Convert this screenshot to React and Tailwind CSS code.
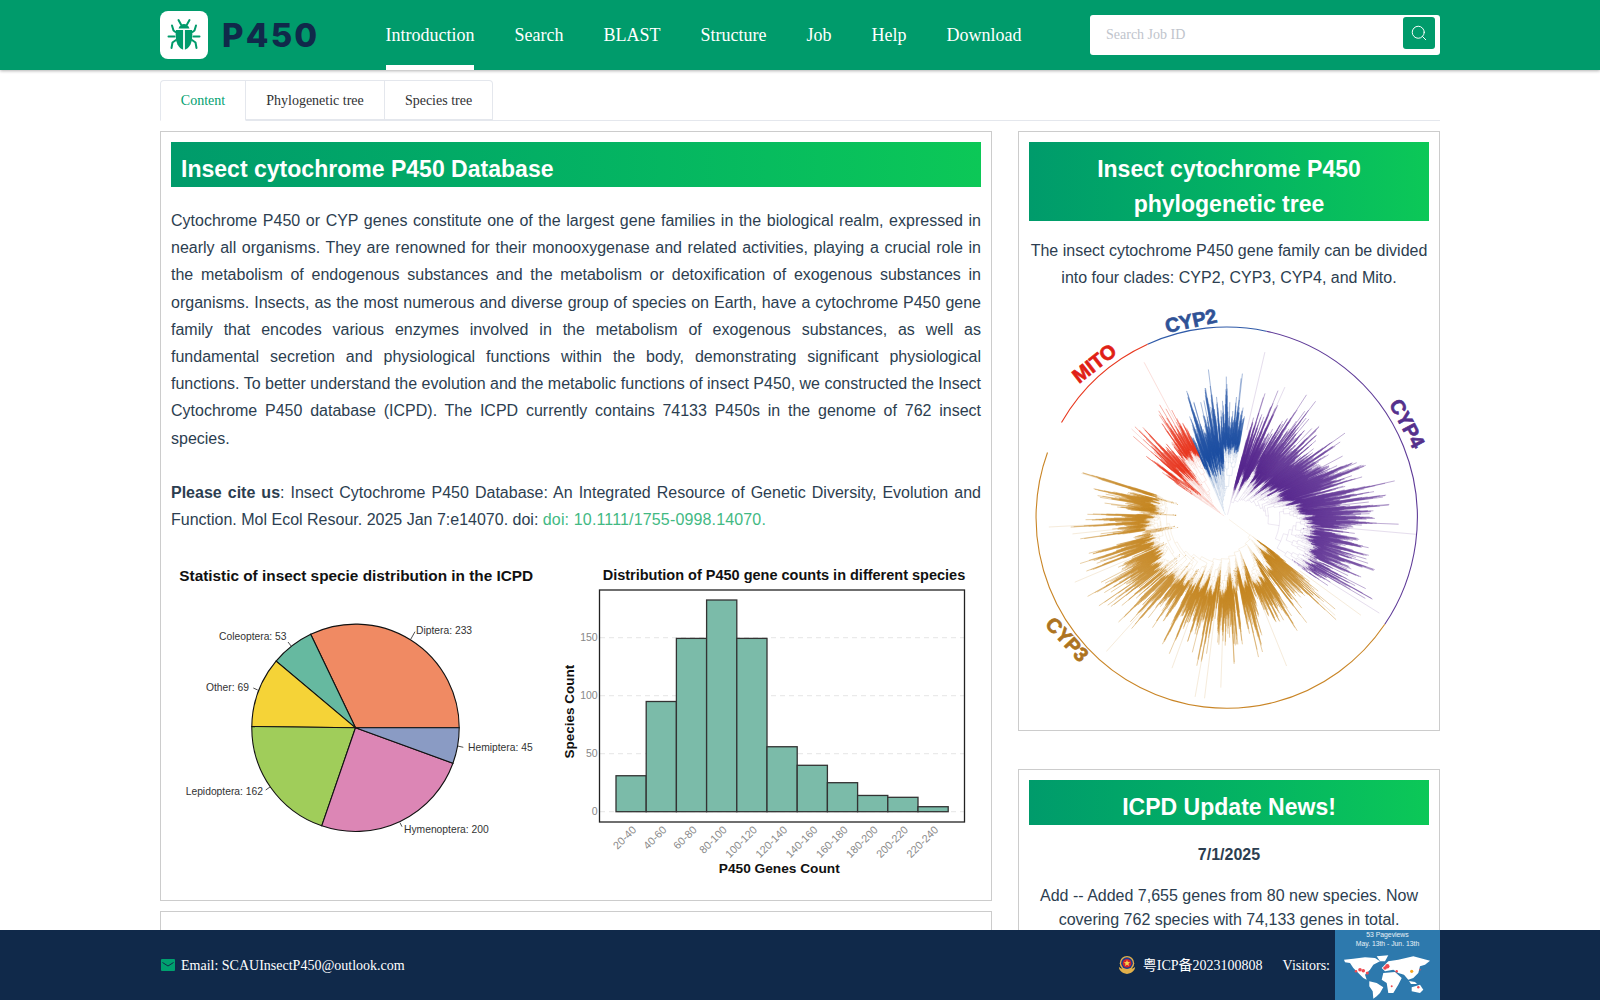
import { useMemo } from "react"
import { Search } from "lucide-react"

const navItems = ["Introduction", "Search", "BLAST", "Structure", "Job", "Help", "Download"]

const Beetle = () => (
  <svg viewBox="0 0 48 48" className="h-[48px] w-[48px]" fill="none" stroke="#009b6b" strokeWidth="2" strokeLinecap="round" strokeLinejoin="round">
    <path d="M18.500 17.500c1-3 3-4.500 5.500-4.500s4.500 1.500 5.500 4.500z" fill="#009b6b" stroke="none" />
    <path d="M16 19h16c.8 5 .3 10.500-1.500 14.500-1.500 3-4 5-6.500 5.500-2.500-.5-5-2.500-6.500-5.500C15.700 29.500 15.200 24 16 19z" fill="#009b6b" stroke="none" />
    <path d="M24 19v20" stroke="#fff" strokeWidth="1.800" />
    <path d="M18.500 9l2.500 4.500M29.500 9L27 13.500" />
    <path d="M12 14.500l1.500 5 2 1.500M36 14.500l-1.500 5-2 1.500" />
    <path d="M8.500 25.500h6M39.500 25.500h-6" />
    <path d="M11.500 37l1-5.500 3.500-2.500M36.500 37l-1-5.500-3.500-2.500" />
  </svg>
)

// slice angles are read from the picture, they do not follow the counts exactly
const pieData = [
  { name: "Diptera", from: 0, to: 115.6, color: "#f08a63" },
  { name: "Coleoptera", from: 115.6, to: 140, color: "#66b9a0" },
  { name: "Other", from: 140, to: 179.3, color: "#f5d337" },
  { name: "Lepidoptera", from: 179.3, to: 251, color: "#a0cd5a" },
  { name: "Hymenoptera", from: 251, to: 340, color: "#dc86b5" },
  { name: "Hemiptera", from: 340, to: 360, color: "#8a9bc4" },
]

const pieLabels = [
  { text: "Diptera: 233", x: 245, y: 83.7, l: [244, 81.7, 239.7, 89.3] },
  { text: "Coleoptera: 53", x: 48, y: 90.3, l: [117, 92, 120.7, 96.7] },
  { text: "Other: 69", x: 35, y: 141, l: [82.3, 138, 86.7, 140] },
  { text: "Lepidoptera: 162", x: 14.7, y: 245, l: [94.7, 240, 99, 237] },
  { text: "Hymenoptera: 200", x: 233, y: 283, l: [231, 276.7, 229, 272.7] },
  { text: "Hemiptera: 45", x: 297, y: 200.7, l: [292.3, 197.3, 286.7, 196] },
]

const PieChart = () => {
  const cx = 184.500
  const cy = 177.800
  const r = 103.700
  const slices = pieData.map((d) => {
    const a0 = (d.from * Math.PI) / 180
    const a1 = (d.to * Math.PI) / 180
    const large = a1 - a0 > Math.PI ? 1 : 0
    const path = `M${cx} ${cy}L${cx + r * Math.cos(a0)} ${cy - r * Math.sin(a0)}A${r} ${r} 0 ${large} 0 ${cx + r * Math.cos(a1)} ${cy - r * Math.sin(a1)}Z`
    return { ...d, path }
  })
  return (
    <svg viewBox="0 0 385 340" className="h-[340px] w-[385px] shrink-0" fontFamily="'Liberation Sans', Arial, sans-serif">
      <text x="8.300" y="31" fontSize="15.350" fontWeight="700" fill="#111">Statistic of insect specie distribution in the ICPD</text>
      {slices.map((s) => (
        <path key={s.name} d={s.path} fill={s.color} stroke="#111" strokeWidth="1.1" />
      ))}
      {pieLabels.map((p) => (
        <g key={p.text}>
          <line x1={p.l[0]} y1={p.l[1]} x2={p.l[2]} y2={p.l[3]} stroke="#222" strokeWidth="0.8" />
          <text x={p.x} y={p.y} fontSize="10.300" fill="#333">{p.text}</text>
        </g>
      ))}
    </svg>
  )
}

const bars = [31, 95, 149.4, 182.5, 149.4, 56, 40, 25, 14, 12.4, 4.3]
const barLabels = ["20-40", "40-60", "60-80", "80-100", "100-120", "120-140", "140-160", "160-180", "180-200", "200-220", "220-240"]

const BarChart = () => {
  const y0 = 261.700
  const k = 1.16
  return (
    <svg viewBox="0 0 440 340" className="h-[340px] w-[440px] shrink-0" fontFamily="'Liberation Sans', Arial, sans-serif">
      <text x="46.700" y="29.500" fontSize="14.500" fontWeight="700" fill="#111">Distribution of P450 gene counts in different species</text>
      {[0, 50, 100, 150].map((v) => (
        <g key={v}>
          <line x1="44" x2="408" y1={y0 - v * k} y2={y0 - v * k} stroke="#ddd" strokeWidth="0.8" strokeDasharray="5 4" />
          <text x="41.700" y={y0 - v * k + 3.500} textAnchor="end" fontSize="10.500" fill="#888">{v}</text>
        </g>
      ))}
      <rect x="43.500" y="40" width="365" height="232" fill="none" stroke="#222" strokeWidth="1.3" />
      {bars.map((b, i) => (
        <rect key={i} x={60 + i * 30.200} y={y0 - b * k} width={30.200} height={b * k} fill="#7bbba9" stroke="#333" strokeWidth="1.300" />
      ))}
      {barLabels.map((l, i) => (
        <text key={l} fontSize="10.800" fill="#888" textAnchor="end" transform={`translate(${81 + i * 30.200} 280.500) rotate(-45)`}>{l}</text>
      ))}
      <text x="223.300" y="322.700" textAnchor="middle" fontSize="13.700" fontWeight="700" fill="#111">P450 Genes Count</text>
      <text transform="translate(18 161.700) rotate(-90)" textAnchor="middle" fontSize="13.500" fontWeight="700" fill="#111">Species Count</text>
    </svg>
  )
}

// radial tree, a real dendrogram grown with a fixed seed so it stays the same between renders
const makeRng = (seed) => () => {
  seed = (seed * 1664525 + 1013904223) % 4294967296
  return seed / 4294967296
}

const interp = (pts, a) => {
  for (let i = 0; i < pts.length - 1; i++) {
    const [a0, v0] = pts[i]
    const [a1, v1] = pts[i + 1]
    if (a <= a0 && a >= a1) return v0 + ((a - a0) / (a1 - a0)) * (v1 - v0)
  }
  return pts[pts.length - 1][1]
}

const clades = [
  { color: "#174a9f", from: 114, to: 80, n: 320, tips: [[114, 112], [100, 116], [90, 124], [80, 122]], inner: [[114, 70], [80, 75]], rootIn: 6 },
  { color: "#e62e14", from: 146, to: 114, n: 320, tips: [[146, 112], [135, 112], [125, 116], [114, 122]], inner: [[146, 85], [114, 70]], rootIn: 5 },
  { color: "#56248c", from: 76, to: -34, n: 1000, tips: [[76, 104], [60, 116], [40, 124], [20, 136], [0, 150], [-15, 146], [-34, 140]], inner: [[76, 40], [40, 55], [20, 62], [0, 78], [-15, 92], [-34, 105]], rootIn: 14 },
  { color: "#c17f14", from: -36, to: -198, n: 1400, tips: [[-36, 128], [-60, 122], [-80, 128], [-100, 130], [-110, 126], [-130, 132], [-150, 140], [-170, 130], [-198, 126]], inner: [[-36, 50], [-60, 66], [-90, 74], [-135, 80], [-180, 66], [-198, 62]], rootIn: 28 },
]

const outliers = [
  { color: "#e8381f", a: 118, r: 176 },
  { color: "#e8381f", a: 137, r: 130 },
  { color: "#5f2d91", a: 77, r: 170 },
  { color: "#5f2d91", a: 66, r: 143 },
  { color: "#5f2d91", a: -5, r: 190 },
  { color: "#5f2d91", a: -32, r: 180 },
  { color: "#c7851f", a: -36, r: 166 },
  { color: "#c7851f", a: -42, r: 146 },
  { color: "#c7851f", a: -68, r: 160 },
  { color: "#c7851f", a: -92, r: 170 },
  { color: "#c7851f", a: -97, r: 182 },
  { color: "#c7851f", a: -100, r: 182 },
  { color: "#c7851f", a: -110, r: 160 },
  { color: "#c7851f", a: -132, r: 180 },
  { color: "#c7851f", a: -157, r: 165 },
  { color: "#c7851f", a: -177, r: 178 },
  { color: "#c7851f", a: -174, r: 155 },
  { color: "#c7851f", a: 163, r: 152 },
]

const CX = 207.700
const CY = 225.700

const pt = (r, deg, cx = CX, cy = CY) => {
  const a = (deg * Math.PI) / 180
  return `${(cx + r * Math.cos(a)).toFixed(1)} ${(cy - r * Math.sin(a)).toFixed(1)}`
}

const arc = (r, a0, a1) => `M${pt(r, a0)}A${r} ${r} 0 ${Math.abs(a0 - a1) > 180 ? 1 : 0} ${a0 > a1 ? 1 : 0} ${pt(r, a1)}`

const growClade = (c, rng) => {
  let leaves = ""
  let branches = ""
  // bumps of the crown: each run of leaves shares a spike, some runs sink to leave a notch
  const profile = []
  while (profile.length < c.n) {
    const size = 4 + Math.floor(rng() * 22)
    const peak = rng() * 58
    const notch = rng() < 0.12 ? 14 + rng() * 24 : 0
    for (let j = 0; j < size; j++) {
      const t = (j + 0.5) / size
      profile.push(peak * Math.pow(1 - Math.abs(2 * t - 1), 1.6) - notch)
    }
  }
  let leafNo = 0
  const grow = (a0, a1, n, parentR, depth) => {
    const mid = (a0 + a1) / 2
    const target = interp(c.inner, mid)
    if (n === 1) {
      const long = rng() < 0.06 ? rng() * 28 : 0
      const raw = interp(c.tips, mid) - 34 + profile[leafNo++] + (rng() - 0.5) * 22 + long
      // nothing may cross the ring
      const tip = Math.min(raw, 172)
      const start = Math.min(parentR, tip - 1)
      leaves += `M${pt(start, mid)}L${pt(tip, mid)}`
      return { a: mid, r: start }
    }
    const ladder = depth < 12 && n > 40
    const f = ladder ? 0.02 + rng() * 0.1 : 0.2 + rng() * 0.6
    const n1 = Math.max(1, Math.min(n - 1, Math.round(n * f)))
    const split = a0 + (a1 - a0) * (n1 / n)
    const step = ladder ? 1 + rng() * 2.500 : Math.max(0.6, (target - parentR) * (0.08 + rng() * 0.2)) + rng() * 3
    const r = Math.min(parentR + step, 150)
    const first = grow(a0, split, n1, r, depth + 1)
    const second = grow(split, a1, n - n1, r, depth + 1)
    branches += arc(r, first.a, second.a)
    branches += `M${pt(r, first.a)}L${pt(first.r, first.a)}M${pt(r, second.a)}L${pt(second.r, second.a)}`
    // keep the root of a wedge close to its first edge
    return { a: depth < 8 ? first.a + (second.a - first.a) * 0.08 : (first.a + second.a) / 2, r }
  }
  const root = grow(c.from, c.to, c.n, c.rootIn, 0)
  branches += `M${pt(3, root.a)}L${pt(root.r, root.a)}`
  return { color: c.color, leaves, branches }
}

const PhyloTree = () => {
  const rings = useMemo(() => {
    const rng = makeRng(450)
    return clades.map((c) => growClade(c, rng))
  }, [])
  return (
    <svg viewBox="0 0 420 440" className="h-[440px] w-[420px]" fontFamily="'Liberation Sans', Arial, sans-serif" fontWeight="700">
      {rings.map((r) => (
        <g key={r.color} stroke={r.color} fill="none">
          <path d={r.branches} strokeWidth="0.3" opacity="0.35" />
          <path d={r.leaves} strokeWidth="0.4" opacity="0.95" />
        </g>
      ))}
      {outliers.map((o, i) => (
        <path key={i} d={`M${pt(90, o.a)}L${pt(o.r, o.a)}`} stroke={o.color} strokeWidth="0.4" opacity="0.4" />
      ))}
      <path d={arc(190.700, 150, 114.500)} stroke="#e8381f" strokeWidth="1.100" fill="none" />
      <path d={arc(190.700, 114.500, 78)} stroke="#2f5aa8" strokeWidth="1.100" fill="none" />
      <path d={arc(190.700, 78, -34)} stroke="#5f3b98" strokeWidth="1.100" fill="none" />
      <path d={arc(190.700, -34, -200)} stroke="#c98526" strokeWidth="1.100" fill="none" />
      <g strokeWidth="0.7" fontSize="20">
        <text stroke="#e01f16" fill="#e01f16" transform="translate(60 92) rotate(-38)">MITO</text>
        <text stroke="#2f5296" fill="#2f5296" transform="translate(147.700 41) rotate(-12)">CYP2</text>
        <text stroke="#55308c" fill="#55308c" transform="translate(369.700 111.700) rotate(62)">CYP4</text>
        <text stroke="#ad7320" fill="#ad7320" transform="translate(25.300 333) rotate(47)">CYP3</text>
      </g>
    </svg>
  )
}

const WorldMap = () => (
  <div className="relative h-[70px] w-[105px] shrink-0 bg-[#2d79ad] font-['Liberation_Sans'] text-white">
    <p className="text-center text-[6.800px] leading-[9px] text-white/90">53 Pageviews<br />May. 13th - Jun. 13th</p>
    <svg viewBox="0 0 105 48" className="absolute bottom-[1px] left-0 h-[48px] w-[105px]" fill="#fff">
      <polygon points="9,8.700 18.300,7.700 30,6.300 40,7 45,10.300 38.300,13.700 35,18.700 30,23.700 31.700,28.700 28.300,27 23.300,22 18.300,17 15,12 10,11.300" />
      <polygon points="41.700,5.300 53.300,4.300 50,10.300 45,10.300" />
      <polygon points="34.300,30.300 41.700,32 48.300,36.300 45,42 41.700,45.300 38.300,47.700 37.700,40.300 34.300,35.300" />
      <polygon points="46.700,17 53.300,10.300 63.300,8.700 78.300,5.300 95,9.700 90,13.700 85,15.300 83.300,22 78.300,27 73.300,28.700 69,23.700 63.300,22 58.300,18.700 50,20.300" />
      <polygon points="48.300,22 60,21 66.700,27 63.300,33.700 58.300,42 53.300,42 51.700,32 46.700,28.700" />
      <polygon points="76.700,36.300 85,33.700 88.300,38.700 85,42 76.700,40.300" />
      <polygon points="74,30 80,31 82,33 76,33" />
    </svg>
    <svg viewBox="0 0 105 48" className="absolute bottom-[1px] left-0 h-[48px] w-[105px]" fill="#ef4b52">
      <circle cx="21" cy="20.300" r="1.300" /><circle cx="25" cy="18.700" r="1.800" /><circle cx="28.300" cy="19.700" r="1.800" /><circle cx="32.300" cy="22" r="1.600" />
      <circle cx="50" cy="17" r="1.800" /><circle cx="52.300" cy="15.300" r="2.200" /><circle cx="61.700" cy="20.300" r="1.200" /><circle cx="56.700" cy="35.300" r="1" />
      <circle cx="83.300" cy="36.300" r="1.200" /><circle cx="85" cy="18.700" r="0.800" />
      <circle cx="76.700" cy="20.300" r="1.600" fill="#f5a623" />
    </svg>
  </div>
)

const PoliceBadge = () => (
  <svg viewBox="0 0 20 22" className="h-[20px] w-[18px] shrink-0">
    <path d="M1 13c0 4 3 7 9 8 6-1 9-4 9-8-1 1-2 2-4 2H5c-2 0-3-1-4-2z" fill="#e2b04a" />
    <circle cx="10" cy="9" r="8" fill="#e2b04a" />
    <circle cx="10" cy="9" r="6.500" fill="#1b3a8f" />
    <circle cx="10" cy="9" r="4.800" fill="#d5232a" />
    <path d="M10 5.500l1 2.300 2.400.2-1.800 1.600.6 2.400L10 10.700 7.800 12l.6-2.400L6.600 8l2.400-.2z" fill="#f4d04f" />
  </svg>
)

const MailIcon = () => (
  <svg viewBox="0 0 14 12" className="ml-[1px] mr-[6px] h-[12px] w-[14px] shrink-0">
    <rect width="14" height="12" rx="1" fill="#00a06f" />
    <path d="M1.500 3.500L7 7l5.500-3.500" fill="none" stroke="#10294a" strokeWidth="1" />
  </svg>
)

const Panel = ({ children, className = "" }) => (
  <div className={`border border-[#cccccc] p-[10px] ${className}`}>{children}</div>
)

export default function App() {
  return (
    <div className="h-screen overflow-hidden bg-white font-['Liberation_Sans',Arial,sans-serif] text-[#2c3e50]">
      <header className="h-[70px] bg-[#009b6b] shadow-[0_1px_3px_rgba(0,0,0,0.3)]">
        <div className="mx-auto flex h-full w-[1280px] items-start font-['Liberation_Serif',serif]">
          <div className="mt-[11px] flex w-[225.500px] items-center">
            <div className="flex h-[48px] w-[48px] items-center justify-center rounded-[8px] bg-white">
              <Beetle />
            </div>
            <span className="ml-[14px] font-['Inter',sans-serif] text-[33px] font-extrabold leading-[48px] tracking-[2.200px] text-[#10294a]">P450</span>
          </div>
          <nav className="flex h-full gap-[40px] text-[18px] text-white">
            {navItems.map((item, i) => (
              <a key={item} className={`block h-full pt-[22px] leading-[26px] ${i === 0 ? "border-b-[5px] border-white" : ""}`}>{item}</a>
            ))}
          </nav>
          <div className="ml-auto mt-[15px] flex h-[40px] w-[350px] justify-between rounded-[3px] bg-white pl-[16px] pr-[5px]">
            <span className="text-[14px] leading-[39px] text-[#c0c4cc]">Search Job ID</span>
            <button className="mt-[2px] flex h-[32px] w-[32px] items-center justify-center rounded-[3px] bg-[#009b6b] text-white">
              <Search size={18} strokeWidth={1.300} />
            </button>
          </div>
        </div>
      </header>

      <main className="mx-auto w-[1280px] pt-[10px]">
        <div className="flex h-[41px] border-b border-[#e4e7ed] font-['Liberation_Serif',serif] text-[14px] text-[#303133]">
          <div className="flex h-[41px] w-[86px] items-center justify-center rounded-tl-[4px] border border-b-white border-[#e4e7ed] bg-white text-[#00a06f]">Content</div>
          <div className="flex h-[40px] w-[139px] items-center justify-center border-y border-r border-[#e4e7ed]">Phylogenetic tree</div>
          <div className="flex h-[40px] w-[108px] items-center justify-center rounded-tr-[4px] border-y border-r border-[#e4e7ed]">Species tree</div>
        </div>

        <div className="mt-[10px] flex items-start justify-between">
          <div className="w-[832px]">
            <Panel className="h-[770px]">
              <h2 className="h-[45px] bg-gradient-to-r from-[#009b6b] to-[#0cc857] pl-[10px] text-[23.040px] font-bold leading-[54px] text-white">Insect cytochrome P450 Database</h2>
              <p className="mt-[20px] text-justify text-[16px] leading-[27.200px]">
                Cytochrome P450 or CYP genes constitute one of the largest gene families in the biological realm, expressed in nearly all organisms. They are renowned for their monooxygenase and related activities, playing a crucial role in the metabolism of endogenous substances and the metabolism or detoxification of exogenous substances in organisms. Insects, as the most numerous and diverse group of species on Earth, have a cytochrome P450 gene family that encodes various enzymes involved in the metabolism of exogenous substances, as well as fundamental secretion and physiological functions within the body, demonstrating significant physiological functions. To better understand the evolution and the metabolic functions of insect P450, we constructed the Insect Cytochrome P450 database (ICPD). The ICPD currently contains 74133 P450s in the genome of 762 insect species.
              </p>
              <p className="mt-[27px] text-justify text-[16px] leading-[27.200px]">
                <strong>Please cite us</strong>: Insect Cytochrome P450 Database: An Integrated Resource of Genetic Diversity, Evolution and Function. Mol Ecol Resour. 2025 Jan 7:e14070. doi: <a className="tracking-[0.150px] text-[#42b983]">doi: 10.1111/1755-0998.14070.</a>
              </p>
              <div className="mt-[17px] flex">
                <PieChart />
                <BarChart />
              </div>
            </Panel>
            <Panel className="mt-[10px] h-[200px]" />
          </div>

          <div className="w-[422px]">
            <Panel className="h-[600px] text-center">
              <h2 className="h-[79px] bg-gradient-to-r from-[#009b6b] to-[#0cc857] text-[23.040px] font-bold leading-[35px] text-white"><span className="block pt-[10px]">Insect cytochrome P450<br />phylogenetic tree</span></h2>
              <p className="mt-[16px] text-[16px] leading-[27px]">The insect cytochrome P450 gene family can be divided into four clades: CYP2, CYP3, CYP4, and Mito.</p>
              <div className="-mx-[10px] mt-[1px] flex h-[420px] justify-center">
                <PhyloTree />
              </div>
            </Panel>
            <Panel className="mt-[38px] h-[400px] text-center">
              <h2 className="h-[45px] bg-gradient-to-r from-[#009b6b] to-[#0cc857] text-[23.040px] font-bold leading-[54px] text-white">ICPD Update News!</h2>
              <p className="mt-[18px] text-[16px] font-bold leading-[24px]">7/1/2025</p>
              <p className="mt-[17px] text-[16px] leading-[24px]">Add -- Added 7,655 genes from 80 new species. Now covering 762 species with 74,133 genes in total.</p>
            </Panel>
          </div>
        </div>
      </main>

      <footer className="fixed bottom-0 left-0 h-[70px] w-full bg-[#10294a] font-['Liberation_Serif','Noto_Sans_CJK_SC',serif] text-[14px] text-white">
        <div className="mx-auto flex h-full w-[1280px] items-center">
          <MailIcon />
          <span>Email: SCAUInsectP450@outlook.com</span>
          <div className="ml-auto flex items-center">
            <PoliceBadge />
            <span className="ml-[7px]">粤ICP备2023100808</span>
            <span className="ml-[20px] mr-[5px]">Visitors:</span>
            <WorldMap />
          </div>
        </div>
      </footer>
    </div>
  )
}
